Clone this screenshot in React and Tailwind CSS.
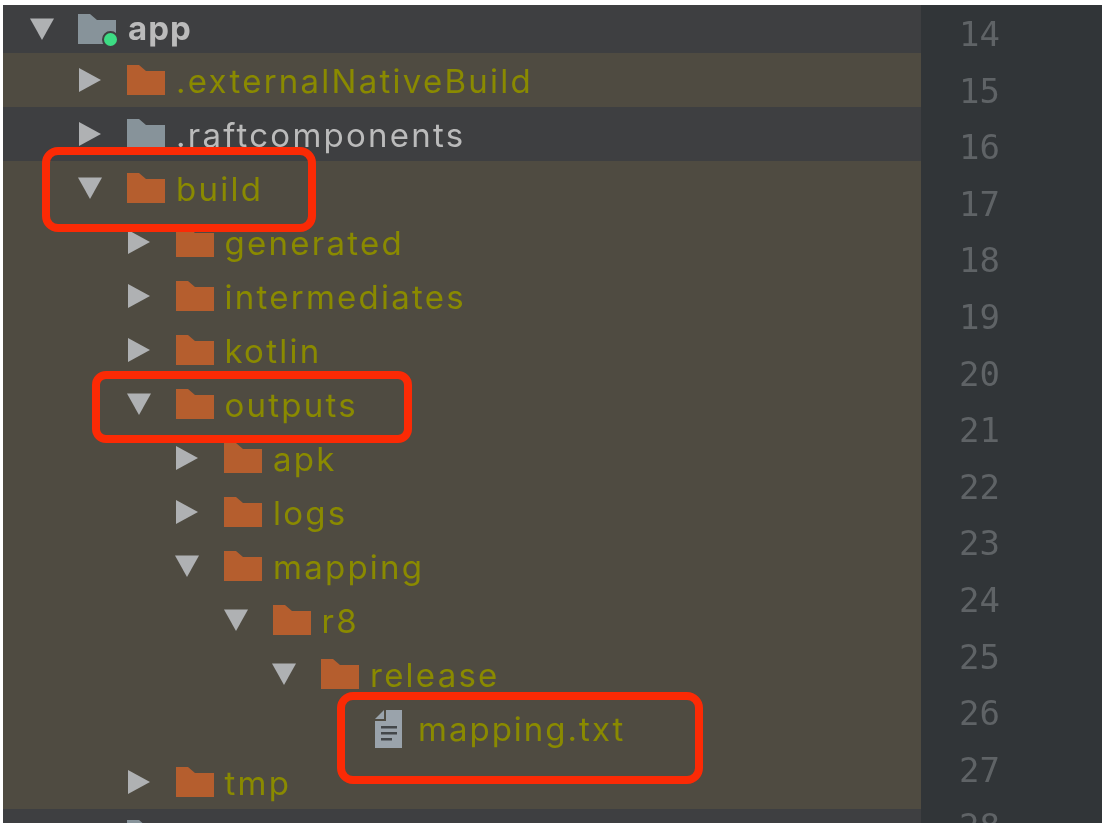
import React from "react";

const rows = [
  { name: ".externalNativeBuild", depth: 0, open: false, changed: true },
  { name: ".raftcomponents", depth: 0, open: false, changed: false },
  { name: "build", depth: 0, open: true, changed: true },
  { name: "generated", depth: 1, open: false, changed: true },
  { name: "intermediates", depth: 1, open: false, changed: true },
  { name: "kotlin", depth: 1, open: false, changed: true },
  { name: "outputs", depth: 1, open: true, changed: true },
  { name: "apk", depth: 2, open: false, changed: true },
  { name: "logs", depth: 2, open: false, changed: true },
  { name: "mapping", depth: 2, open: true, changed: true },
  { name: "r8", depth: 3, open: true, changed: true },
  { name: "release", depth: 4, open: true, changed: true },
  { name: "mapping.txt", depth: 5, file: true, changed: true },
  { name: "tmp", depth: 1, open: false, changed: true },
];

const lines = [14, 15, 16, 17, 18, 19, 20, 21, 22, 23, 24, 25, 26, 27, 28];

function Arrow({ open }) {
  return (
    <svg viewBox="0 0 24 24" className="w-[24px] h-[24px] shrink-0" fill="#afb1b3">
      {open ? <path d="M0 1.5H24L12 23Z" /> : <path d="M1 0L23 12L1 24Z" />}
    </svg>
  );
}

function Folder({ color }) {
  return (
    <svg viewBox="0 0 38 30" className="w-[38px] h-[30px] shrink-0" fill={color}>
      <path d="M0 0H12L19 6H38V30H0Z" />
    </svg>
  );
}

function FileIcon() {
  return (
    <svg viewBox="0 0 27 39" className="w-[27px] h-[39px] shrink-0">
      <path d="M11 1H27V39H0V12H11Z" fill="#9aa3ab" />
      <path d="M0 10L9 1V10Z" fill="#9aa3ab" />
      <path d="M6 17H22V19.5H6ZM6 23H22V25.5H6ZM6 29H17V31.5H6Z" fill="#43474a" />
    </svg>
  );
}

function Row({ row }) {
  const left = 75 + row.depth * 48.5;
  if (row.file) {
    return (
      <div className="h-[54px] shrink-0 flex items-center bg-[#4f4b41] pl-[372px]">
        <FileIcon />
        <span className="ml-[16px] pt-[4px] text-[33px] tracking-[2px] text-[#8a8a00]">{row.name}</span>
      </div>
    );
  }
  return (
    <div
      className={`h-[54px] shrink-0 flex items-center ${row.changed ? "bg-[#4f4b41]" : "bg-[#3e3f41]"}`}
      style={{ paddingLeft: left }}
    >
      <div className="w-[49px] shrink-0">
        <Arrow open={row.open} />
      </div>
      <Folder color={row.changed ? "#b55e2e" : "#87939a"} />
      <span
        className={`ml-[11px] pt-[4px] text-[33px] tracking-[2.25px] whitespace-nowrap ${
          row.changed ? "text-[#8a8a00]" : "text-[#bbbbbb]"
        }`}
      >
        {row.name}
      </span>
    </div>
  );
}

export default function App() {
  return (
    <div className="relative w-[1102px] h-[826px] overflow-hidden bg-white pt-[5px] pb-[3px] pl-[3px] font-['Inter',sans-serif] blur-[0.5px]">
      <div className="flex h-full">
        {/* Project tree */}
        <div className="w-[918px] shrink-0 flex flex-col overflow-hidden bg-[#3e3f41]">
          <div className="h-[48px] shrink-0 flex items-center pl-[27px]">
            <div className="w-[48px] shrink-0">
              <Arrow open />
            </div>
            <div className="relative shrink-0">
              <Folder color="#87939a" />
              <span className="absolute -right-[3px] -bottom-[4px] w-[17px] h-[17px] rounded-full bg-[#3ddc84] border-2 border-[#3e3f41]" />
            </div>
            <span className="ml-[12px] text-[33px] font-bold tracking-[1px] text-[#bbbbbb]">app</span>
          </div>
          {rows.map((row) => (
            <Row key={row.name} row={row} />
          ))}
          <div className="pl-[124px] pt-[11px]">
            <Folder color="#87939a" />
          </div>
        </div>

        {/* Editor gutter */}
        <div className="flex-1 overflow-hidden bg-[#313538] pl-[38px] pt-[1px] font-['DejaVu_Sans_Mono',monospace] text-[34px] leading-[56.6px] text-[#5f6366]">
          {lines.map((n) => (
            <div key={n}>{n}</div>
          ))}
        </div>
      </div>

      {/* Red annotation boxes */}
      <div className="absolute left-[42px] top-[147px] w-[274px] h-[85px] rounded-[16px] border-[8px] border-[#fb2a05]" />
      <div className="absolute left-[92px] top-[371px] w-[320px] h-[72px] rounded-[14px] border-[8px] border-[#fb2a05]" />
      <div className="absolute left-[337px] top-[692px] w-[366px] h-[92px] rounded-[16px] border-[8px] border-[#fb2a05]" />
    </div>
  );
}
